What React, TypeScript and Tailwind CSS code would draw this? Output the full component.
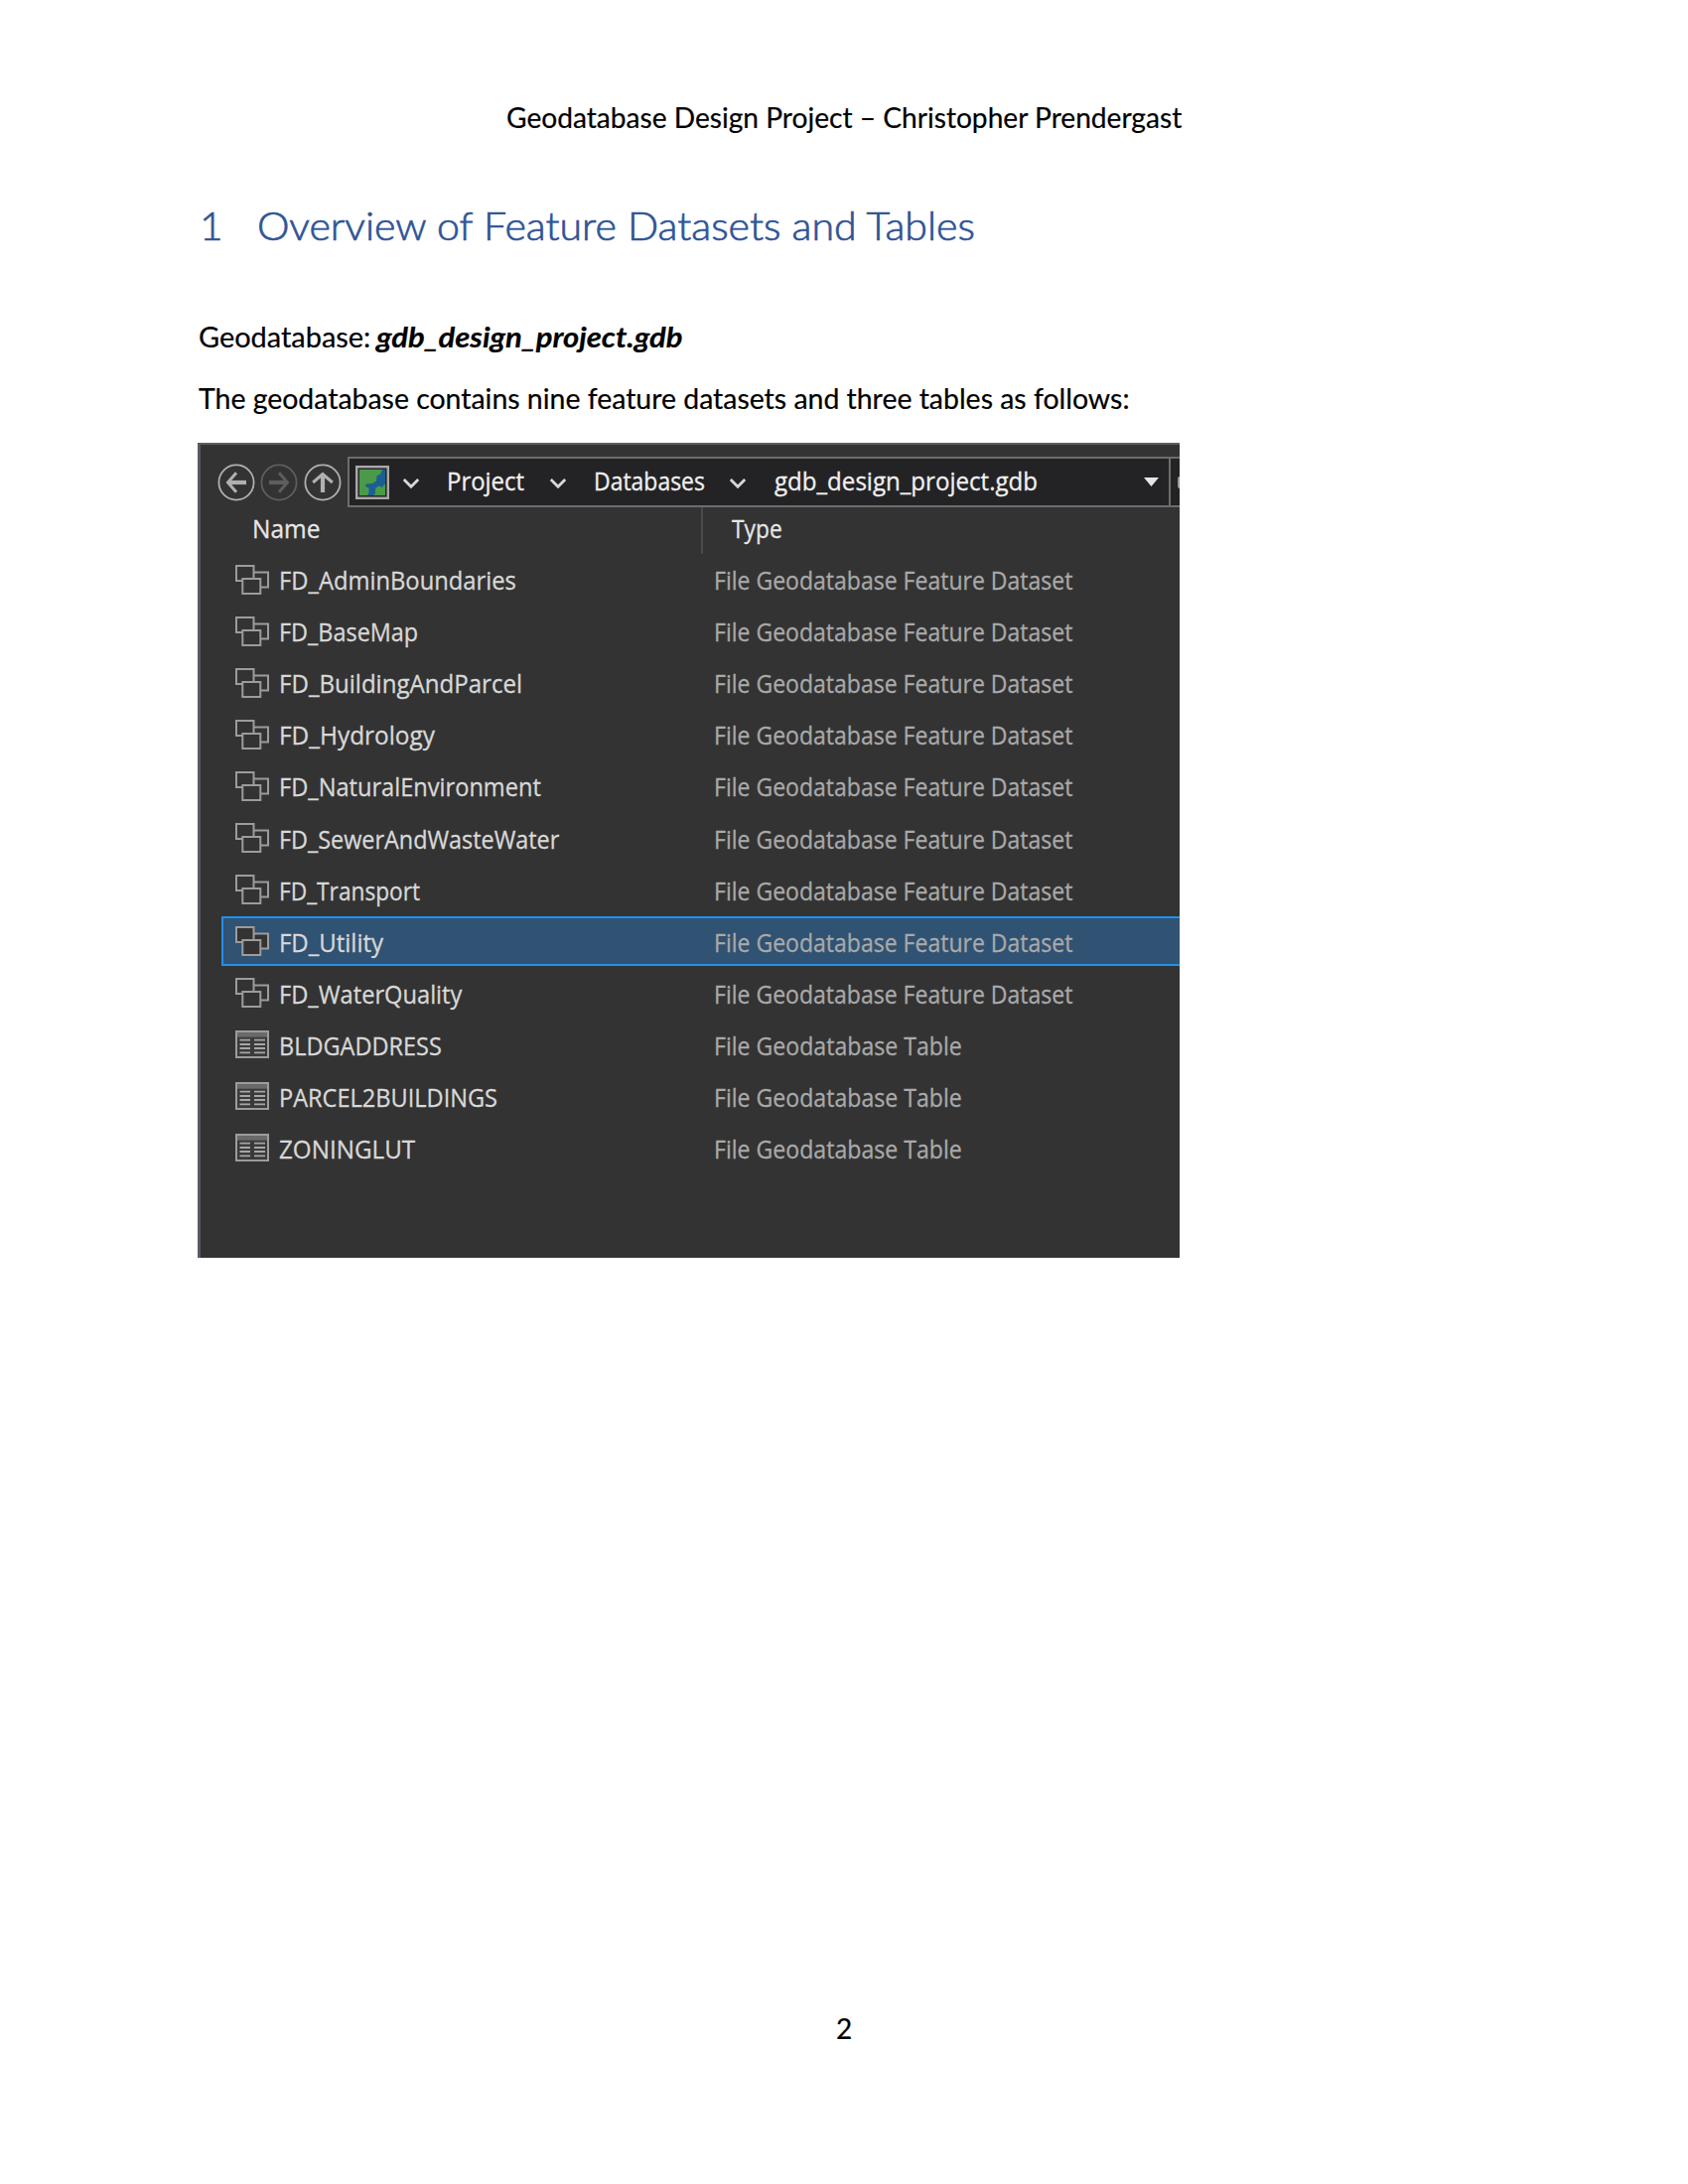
import { useLayoutEffect, useRef, useState } from "react";

/* A single line of text stretched or condensed horizontally to a set width. */
function Line({ text, width, className = "" }: { text: string; width: number; className?: string }) {
  const ref = useRef<HTMLSpanElement>(null);
  const [scale, setScale] = useState(1);
  useLayoutEffect(() => {
    if (ref.current) setScale(width / ref.current.offsetWidth);
  }, [width, text]);
  return (
    <span className={"block shrink-0 whitespace-pre " + className} style={{ width }}>
      <span ref={ref} className="inline-block origin-left" style={{ transform: `scaleX(${scale})` }}>
        {text}
      </span>
    </span>
  );
}

function DatasetIcon() {
  return (
    <svg className="h-[32px] w-[34px] shrink-0" viewBox="0 0 34 32" fill="#333333" stroke="#9c9c9c" strokeWidth="2">
      <rect x="16" y="8.5" width="17" height="15" />
      <rect x="1" y="2" width="17.5" height="15" />
      <rect x="7.3" y="15" width="18" height="15" />
    </svg>
  );
}

function TableIcon() {
  return (
    <svg className="h-[32px] w-[34px] shrink-0" viewBox="0 0 34 32" fill="none">
      <rect x="1" y="2" width="32" height="26" fill="#3a3a3a" stroke="#9c9c9c" strokeWidth="2" />
      <rect x="2" y="3" width="30" height="4.7" fill="#6a6a6a" />
      <path d="M4.5 10.7H15M19 10.7H30M4.5 15H15M19 15H30M4.5 19H15M19 19H30M4.5 23.3H15M19 23.3H30" stroke="#a6a6a6" strokeWidth="1.8" />
    </svg>
  );
}

function RoundButton({ color, rotate }: { color: string; rotate: number }) {
  return (
    <svg className="size-[38px] shrink-0" viewBox="0 0 38 38" fill="none" stroke={color}>
      <circle cx="19" cy="19" r="17.6" strokeWidth="1.8" />
      <g transform={`rotate(${rotate} 19 19)`} strokeWidth="3">
        <path d="M29 19H10.5" strokeWidth="4.2" />
        <path d="M19 9.2L10.5 19L19 28.8" />
      </g>
    </svg>
  );
}

function Chevron() {
  return (
    <svg className="h-[12px] w-[18px] shrink-0" viewBox="0 0 18 12" fill="none" stroke="#d8d8d8" strokeWidth="2.8">
      <path d="M1.8 2L9 9.3L16.2 2" />
    </svg>
  );
}

function MapIcon() {
  return (
    <svg className="size-[34px] shrink-0" viewBox="0 0 34 34">
      <rect x="1.2" y="1.2" width="31.6" height="31.6" fill="#2b2b2b" stroke="#a8a8a8" strokeWidth="2.4" />
      <rect x="4" y="4" width="26" height="26" fill="#4a9a48" />
      <path d="M27 4H30V19L28.5 19.5L27 22L24 20.5L21 22L20 24.5V28L18 30H12L13.5 27V22.5L10.5 21.5V18.5L17 18L21 15.5L21.5 10.5L25 8.5Z" fill="#1b5f92" />
    </svg>
  );
}

type Item = { name: string; width: number; table?: boolean; selected?: boolean };

const items: Item[] = [
  { name: "FD_AdminBoundaries", width: 238.5 },
  { name: "FD_BaseMap", width: 140.5 },
  { name: "FD_BuildingAndParcel", width: 245.5 },
  { name: "FD_Hydrology", width: 157 },
  { name: "FD_NaturalEnvironment", width: 263.5 },
  { name: "FD_SewerAndWasteWater", width: 282.5 },
  { name: "FD_Transport", width: 142.5 },
  { name: "FD_Utility", width: 105.5, selected: true },
  { name: "FD_WaterQuality", width: 184.5 },
  { name: "BLDGADDRESS", width: 163.5, table: true },
  { name: "PARCEL2BUILDINGS", width: 220.5, table: true },
  { name: "ZONINGLUT", width: 137.5, table: true },
];

function Row({ item }: { item: Item }) {
  return (
    <div className="ml-[21px] flex h-[52.12px] items-center">
      <div
        className={
          "flex h-[50px] flex-1 items-center border-y-2 border-l-2 pl-[12px] " +
          (item.selected ? "border-[#2090f0] bg-[#305273]" : "border-transparent")
        }
      >
        {item.table ? <TableIcon /> : <DatasetIcon />}
        <div className="ml-[9.5px] w-[438.6px] pt-[1px]">
          <Line text={item.name} width={item.width} className="text-[#d8d8d8]" />
        </div>
        <div className="pt-[1px]">
          <Line
            text={item.table ? "File Geodatabase Table" : "File Geodatabase Feature Dataset"}
            width={item.table ? 249.5 : 361}
            className="text-[#a9a9a9]"
          />
        </div>
      </div>
    </div>
  );
}

function CatalogPanel() {
  return (
    <div className="ml-[199px] mt-[25px] flex h-[821px] w-[989px] flex-col overflow-hidden border-l-[3px] border-t-2 border-l-[#575a62] border-t-[#5b5e60] bg-[#333333] font-['Open_Sans',sans-serif] text-[25px] leading-[34px] [-webkit-text-stroke-width:0.3px]">
      <div className="mt-[12px] flex h-[51px] shrink-0 items-center">
        <div className="ml-[16.5px] flex gap-[5.7px]">
          <RoundButton color="#b0b0b0" rotate={0} />
          <RoundButton color="#5e5e5e" rotate={180} />
          <RoundButton color="#b0b0b0" rotate={90} />
        </div>
        <div className="ml-[6px] flex h-[51px] flex-1 items-center border-y-[2.5px] border-l-[2.5px] border-[#6d6d6d] bg-[#232325] text-[#f0f0f0]">
          <div className="ml-[6px]"><MapIcon /></div>
          <div className="ml-[13px] pt-[3px]"><Chevron /></div>
          <div className="-mt-[4px] ml-[27px]"><Line text="Project" width={78.5} /></div>
          <div className="ml-[24.5px] pt-[3px]"><Chevron /></div>
          <div className="-mt-[4px] ml-[27px]"><Line text="Databases" width={112} /></div>
          <div className="ml-[24.5px] pt-[3px]"><Chevron /></div>
          <div className="-mt-[4px] ml-[28px]"><Line text="gdb_design_project.gdb" width={265} /></div>
          <svg className="ml-auto mr-[10.5px] h-[9px] w-[15px]" viewBox="0 0 15 9"><path d="M0 0H15L7.5 9Z" fill="#e6e6e6" /></svg>
          <div className="flex h-full w-[11px] items-center justify-end border-l-2 border-[#6d6d6d]">
            <div className="h-[12px] w-[2.5px] rounded-l-full bg-[#969696]" />
          </div>
        </div>
      </div>
      <div className="flex h-[46.5px] shrink-0 items-start pt-[4px] text-[#e6e6e6]">
        <div className="ml-[51.5px] w-[452.5px]"><Line text="Name" width={68.5} /></div>
        <div className="-mt-[4px] h-[47px] w-[2px] bg-[#4a4a4a]" />
        <div className="ml-[28.5px]"><Line text="Type" width={51} /></div>
      </div>
      {items.map((item) => (
        <Row key={item.name} item={item} />
      ))}
    </div>
  );
}

export default function App() {
  return (
    <div className="flex h-[2200px] w-[1700px] flex-col overflow-hidden bg-white font-['Lato',sans-serif] text-[28px] leading-[40px] text-black [-webkit-text-stroke-width:0.2px]">
      <header className="ml-[509.5px] mt-[98px]">
        <Line text="Geodatabase Design Project – Christopher Prendergast" width={680} />
      </header>
      <h1 className="ml-[200.5px] mt-[65px] flex h-[48px] text-[39px] font-light leading-[48px] text-[#2f5496] [-webkit-text-stroke:0.7px_#2f5496]">
        <Line text="1" width={24} />
        <Line text="Overview of Feature Datasets and Tables" width={723} className="ml-[34.5px]" />
      </h1>
      <p className="ml-[199.5px] mt-[68px] flex">
        <Line text="Geodatabase:" width={173.5} />
        <Line text="gdb_design_project.gdb" width={308} className="ml-[6px] font-bold italic" />
      </p>
      <p className="ml-[199.5px] mt-[22px]">
        <Line text="The geodatabase contains nine feature datasets and three tables as follows:" width={937} />
      </p>
      <CatalogPanel />
      <footer className="mt-[756px] text-center">2</footer>
    </div>
  );
}
